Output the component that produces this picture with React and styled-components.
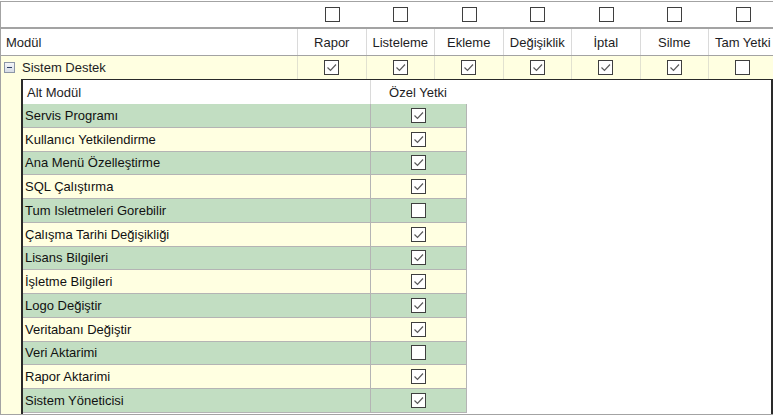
import styled, { createGlobalStyle } from "styled-components";

const GlobalStyle = createGlobalStyle`
  body {
    margin: 0;
    background: #fff;
    font-family: "Liberation Sans", Arial, sans-serif;
    font-size: 13px;
    color: #1d1d24;
  }
`;

const columns = ["Rapor", "Listeleme", "Ekleme", "Değişiklik", "İptal", "Silme", "Tam Yetki"];
const masterChecks = [true, true, true, true, true, true, false];

const subModules = [
  ["Servis Programı", true],
  ["Kullanıcı Yetkilendirme", true],
  ["Ana Menü Özelleştirme", true],
  ["SQL Çalıştırma", true],
  ["Tum Isletmeleri Gorebilir", false],
  ["Çalışma Tarihi Değişikliği", true],
  ["Lisans Bilgileri", true],
  ["İşletme Bilgileri", true],
  ["Logo Değiştir", true],
  ["Veritabanı Değiştir", true],
  ["Veri Aktarimi", false],
  ["Rapor Aktarimi", true],
  ["Sistem Yöneticisi", true],
];

const CheckBox = ({ checked }) => (
  <Box>
    {checked && (
      <svg width="13" height="13" viewBox="0 0 13 13">
        <polyline points="2.5,6.5 5.5,9.5 11,3.5" fill="none" stroke="#5a5a5a" strokeWidth="1.2" />
      </svg>
    )}
  </Box>
);

const App = () => {
  return (
    <>
      <GlobalStyle />
      <Grid>
        <FilterRow>
          <Cell />
          {columns.map((c) => (
            <Cell key={c} $center>
              <CheckBox checked={false} />
            </Cell>
          ))}
        </FilterRow>
        <HeaderRow>
          <HeadCell>Modül</HeadCell>
          {columns.map((c) => (
            <HeadCell key={c} $center>{c}</HeadCell>
          ))}
        </HeaderRow>
        <MasterRow>
          <MasterCell>
            <Expander />
            <span>Sistem Destek</span>
          </MasterCell>
          {masterChecks.map((v, i) => (
            <MasterCell key={i} $center>
              <CheckBox checked={v} />
            </MasterCell>
          ))}
        </MasterRow>
        <DetailArea>
          <Detail>
            <DetailHeader>
              <DetailHeadCell>Alt Modül</DetailHeadCell>
              <DetailHeadCell $center>Özel Yetki</DetailHeadCell>
            </DetailHeader>
            {subModules.map(([name, v], i) => (
              <DetailRow key={name} $alt={i % 2 === 1}>
                <DetailCell>{name}</DetailCell>
                <DetailCell $center>
                  <CheckBox checked={v} />
                </DetailCell>
              </DetailRow>
            ))}
          </Detail>
        </DetailArea>
      </Grid>
    </>
  );
};

const Grid = styled.div`
  width: 773px;
  height: 414px;
  overflow: hidden;
  margin-top: 1px;
  border-top: 1px solid #a3a3a3;
  border-left: 1px solid #a3a3a3;
  box-sizing: border-box;
  display: flex;
  flex-direction: column;
`;
const RowBase = styled.div`
  display: grid;
  grid-template-columns: 297px repeat(7, 68.5px);
  flex-shrink: 0;
`;
const FilterRow = styled(RowBase)`
  height: 25px;
  border-bottom: 2px solid #a3a3a3;
`;
const Cell = styled.div`
  display: flex;
  align-items: center;
  justify-content: ${(p) => (p.$center ? "center" : "flex-start")};
  white-space: nowrap;
`;
const HeaderRow = styled(RowBase)`
  height: 26px;
  border-bottom: 1px solid #a3a3a3;
`;
const HeadCell = styled(Cell)`
  padding-left: ${(p) => (p.$center ? "0" : "5px")};
  border-right: 1px solid #dadada;
`;
const MasterRow = styled(RowBase)`
  height: 23px;
  background: #ffffe1;
`;
const MasterCell = styled(Cell)`
  border-right: 1px solid #e2e2d0;
  padding-left: ${(p) => (p.$center ? "0" : "3px")};
  gap: 7px;
`;
const Expander = styled.span`
  position: relative;
  width: 9px;
  height: 9px;
  border: 1px solid #8c96a6;
  background: linear-gradient(#f4f6f9, #d6dce6);
  &::after {
    content: "";
    position: absolute;
    left: 2px;
    top: 4px;
    width: 5px;
    height: 1px;
    background: #2c3e63;
  }
`;
const Box = styled.span`
  width: 13px;
  height: 13px;
  border: 1px solid #3f3f3f;
  background: #fff;
  display: inline-flex;
  align-items: center;
  justify-content: center;
`;
const DetailArea = styled.div`
  flex: 1;
  background: #ffffe1;
  padding-left: 20px;
  display: flex;
  border-bottom: 1px solid #a3a3a3;
`;
const Detail = styled.div`
  flex: 1;
  background: #fff;
  border-top: 1px solid #2a2a2a;
  border-left: 2px solid #2a2a2a;
  border-right: 2px solid #2a2a2a;
  overflow: hidden;
`;
const DetailHeader = styled.div`
  display: grid;
  grid-template-columns: 348px 94px;
  height: 24px;
`;
const DetailHeadCell = styled(Cell)`
  padding-left: ${(p) => (p.$center ? "0" : "4px")};
  border-right: ${(p) => (p.$center ? "none" : "1px solid #dadada")};
  color: #1d1d24;
`;
const DetailRow = styled.div`
  display: grid;
  grid-template-columns: 348px 94px;
  width: 443px;
  height: 22.75px;
  border-bottom: 1px solid #b4b4b4;
  border-right: 1px solid #b4b4b4;
  background: ${(p) => (p.$alt ? "#ffffe1" : "#c2dec2")};
`;
const DetailCell = styled(Cell)`
  padding-left: ${(p) => (p.$center ? "0" : "2px")};
  border-right: ${(p) => (p.$center ? "none" : "1px solid #b4b4b4")};
  color: #111;
`;

export default App;
